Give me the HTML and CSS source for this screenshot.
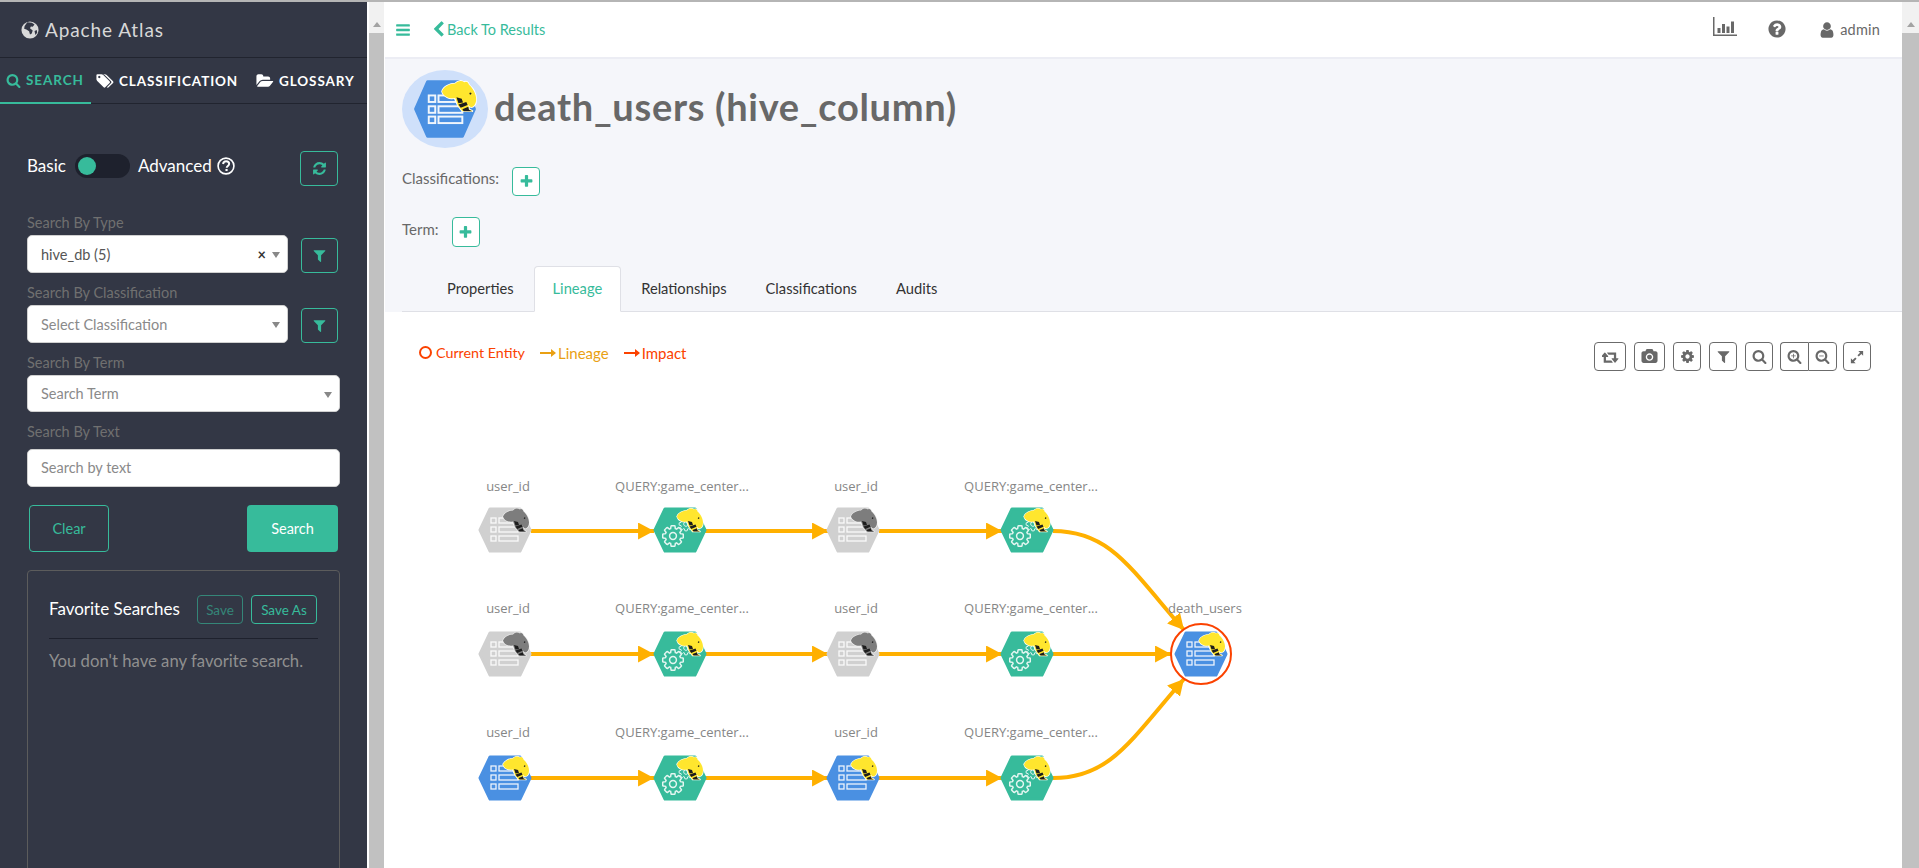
FILE: index.html
```html
<!DOCTYPE html>
<html lang="en">
<head>
<meta charset="utf-8">
<title>Apache Atlas</title>
<link rel="stylesheet" href="styles.css">
</head>
<body>
<svg class="sprite" xmlns="http://www.w3.org/2000/svg">
  <defs>
    <symbol id="i-search" viewBox="0 0 1792 1792"><path d="M1216 832q0-185-131.500-316.500t-316.500-131.500-316.500 131.500-131.500 316.500 131.500 316.500 316.500 131.500 316.500-131.500 131.500-316.500zm512 832q0 52-38 90t-90 38q-54 0-90-38l-343-342q-179 124-399 124-143 0-273.500-55.500t-225-150-150-225-55.500-273.500 55.500-273.500 150-225 225-150 273.500-55.500 273.500 55.500 225 150 150 225 55.500 273.500q0 220-124 399l343 343q37 37 37 90z"/></symbol>
    <symbol id="i-zoomin" viewBox="0 0 1792 1792"><path d="M1216 832q0-185-131.500-316.500t-316.500-131.500-316.500 131.500-131.500 316.500 131.500 316.500 316.500 131.500 316.500-131.500 131.500-316.500zm512 832q0 52-38 90t-90 38q-54 0-90-38l-343-342q-179 124-399 124-143 0-273.500-55.500t-225-150-150-225-55.500-273.500 55.500-273.500 150-225 225-150 273.500-55.500 273.500 55.500 225 150 150 225 55.500 273.500q0 220-124 399l343 343q37 37 37 90z"/><path d="M720 560h96v224h224v96h-224v224h-96v-224h-224v-96h224z"/></symbol>
    <symbol id="i-zoomout" viewBox="0 0 1792 1792"><path d="M1216 832q0-185-131.500-316.500t-316.500-131.500-316.500 131.500-131.500 316.500 131.500 316.500 316.500 131.500 316.500-131.500 131.500-316.500zm512 832q0 52-38 90t-90 38q-54 0-90-38l-343-342q-179 124-399 124-143 0-273.500-55.500t-225-150-150-225-55.500-273.500 55.500-273.500 150-225 225-150 273.500-55.500 273.500 55.500 225 150 150 225 55.500 273.500q0 220-124 399l343 343q37 37 37 90z"/><path d="M496 784h544v96h-544z"/></symbol>
    <symbol id="i-filter" viewBox="0 0 1792 1792"><path d="M1595 295q17 41-14 70l-493 493v742q0 42-39 59-13 5-25 5-27 0-45-19l-256-256q-19-19-19-45v-486l-493-493q-31-29-14-70 17-39 59-39h1280q42 0 59 39z"/></symbol>
    <symbol id="i-plus" viewBox="0 0 1792 1792"><path d="M1600 736v192q0 40-28 68t-68 28h-416v416q0 40-28 68t-68 28h-192q-40 0-68-28t-28-68v-416h-416q-40 0-68-28t-28-68v-192q0-40 28-68t68-28h416v-416q0-40 28-68t68-28h192q40 0 68 28t28 68v416h416q40 0 68 28t28 68z"/></symbol>
    <symbol id="i-refresh" viewBox="0 0 1792 1792"><path d="M1639 1056q0 5-1 7-64 268-268 434.500t-478 166.500q-146 0-282.500-55t-243.500-157l-129 129q-19 19-45 19t-45-19-19-45v-448q0-26 19-45t45-19h448q26 0 45 19t19 45-19 45l-137 137q71 66 161 102t187 36q134 0 250-65t186-179q11-17 53-117 8-23 30-23h192q13 0 22.500 9.500t9.500 22.500zm25-800v448q0 26-19 45t-45 19h-448q-26 0-45-19t-19-45 19-45l138-138q-148-137-349-137-134 0-250 65t-186 179q-11 17-53 117-8 23-30 23h-199q-13 0-22.500-9.500t-9.500-22.500v-7q65-268 270-434.500t480-166.500q146 0 284 55.500t245 156.500l130-129q19-19 45-19t45 19 19 45z"/></symbol>
    <symbol id="i-help" viewBox="0 0 1792 1792"><path d="M1024 1376v-192q0-14-9-23t-23-9h-192q-14 0-23 9t-9 23v192q0 14 9 23t23 9h192q14 0 23-9t9-23zm256-672q0-88-55.500-163t-138.500-116-170-41q-243 0-371 213-15 24 8 42l132 100q7 6 19 6 16 0 25-12 53-68 86-92 34-24 86-24 48 0 85.500 26t37.500 59q0 38-20 61t-68 45q-63 28-115.500 86.500t-52.500 125.500v36q0 14 9 23t23 9h192q14 0 23-9t9-23q0-19 21.500-49.500t54.500-49.500q32-18 49-28.500t46-35 44.500-48 28-60.500 12.500-81zm384 192q0 209-103 385.500t-279.500 279.500-385.500 103-385.500-103-279.500-279.500-103-385.500 103-385.500 279.500-279.500 385.500-103 385.500 103 279.500 279.500 103 385.500z"/></symbol>
    <symbol id="i-help-o" viewBox="0 0 20 20"><circle cx="10" cy="10" r="8.800" fill="none" stroke="currentColor" stroke-width="1.800"/><path d="M6.700 7.800c.3-2 1.700-3 3.400-3 2 0 3.400 1.200 3.400 2.800 0 2.400-2.700 2.400-2.700 4.400" fill="none" stroke="currentColor" stroke-width="2.200"/><rect x="9.400" y="13.300" width="2.400" height="2.300"/></symbol>
    <symbol id="i-user" viewBox="0 0 1792 1792"><path d="M1536 1399q0 109-62.500 187t-150.500 78h-854q-88 0-150.500-78t-62.500-187q0-85 8.500-160.500t31.500-152 58.500-131 94-89 134.500-34.500q131 128 313 128t313-128q76 0 134.500 34.500t94 89 58.500 131 31.500 152 8.500 160.500zm-256-887q0 159-112.500 271.500t-271.500 112.500-271.500-112.500-112.500-271.500 112.500-271.500 271.500-112.500 271.500 112.500 112.500 271.500z"/></symbol>
    <symbol id="i-bars" viewBox="0 0 1792 1792"><path d="M1664 1344v128q0 26-19 45t-45 19h-1408q-26 0-45-19t-19-45v-128q0-26 19-45t45-19h1408q26 0 45 19t19 45zm0-512v128q0 26-19 45t-45 19h-1408q-26 0-45-19t-19-45v-128q0-26 19-45t45-19h1408q26 0 45 19t19 45zm0-512v128q0 26-19 45t-45 19h-1408q-26 0-45-19t-19-45v-128q0-26 19-45t45-19h1408q26 0 45 19t19 45z"/></symbol>
    <symbol id="i-back" viewBox="0 0 1792 1792"><path d="M1427 301l-531 531 531 531q19 19 19 45t-19 45l-166 166q-19 19-45 19t-45-19l-742-742q-19-19-19-45t19-45l742-742q19-19 45-19t45 19l166 166q19 19 19 45t-19 45z"/></symbol>
    <symbol id="i-cog" viewBox="0 0 1792 1792"><path d="M1152 896q0-106-75-181t-181-75-181 75-75 181 75 181 181 75 181-75 75-181zm512-109v222q0 12-8 23t-20 13l-185 28q-19 54-39 91 35 50 107 138 10 12 10 25t-9 23q-27 37-99 108t-94 71q-12 0-26-9l-138-108q-44 23-91 38-16 136-29 186-7 28-36 28h-222q-14 0-24.500-8.500t-11.500-21.500l-28-184q-49-16-90-37l-141 107q-10 9-25 9-14 0-25-11-126-114-165-168-7-10-7-23 0-12 8-23 15-21 51-66.500t54-70.500q-27-50-41-99l-183-27q-13-2-21-12.500t-8-23.500v-222q0-12 8-23t19-13l186-28q14-46 39-92-40-57-107-138-10-12-10-24 0-10 9-23 26-36 98.500-107.500t94.500-71.500q13 0 26 10l138 107q44-23 91-38 16-136 29-186 7-28 36-28h222q14 0 24.500 8.500t11.500 21.500l28 184q49 16 90 37l142-107q9-9 24-9 13 0 25 10 129 119 165 170 7 8 7 22 0 12-8 23-15 21-51 66.500t-54 70.500q26 50 41 98l183 28q13 2 21 12.500t8 23.500z"/></symbol>
    <symbol id="i-camera" viewBox="0 0 1920 1792"><path d="M960 672q119 0 203.500 84.500t84.500 203.500-84.500 203.500-203.500 84.500-203.500-84.500-84.500-203.500 84.500-203.500 203.500-84.500zm704-416q106 0 181 75t75 181v896q0 106-75 181t-181 75h-1408q-106 0-181-75t-75-181v-896q0-106 75-181t181-75h224l51-136q19-49 69.500-84.500t103.500-35.500h512q53 0 103.500 35.500t69.500 84.500l51 136h224zm-704 1152q185 0 316.500-131.500t131.500-316.500-131.500-316.500-316.500-131.500-316.500 131.500-131.500 316.500 131.500 316.500 316.500 131.500z"/></symbol>
    <symbol id="i-folder" viewBox="0 0 1920 1792"><path d="M1879 952q0 31-31 66l-336 396q-43 51-120.500 86.500t-143.500 35.500h-1088q-34 0-60.500-13t-26.500-43q0-31 31-66l336-396q43-51 120.500-86.500t143.500-35.500h1088q34 0 60.500 13t26.500 43zm-343-344v160h-832q-94 0-197 47.500t-164 119.500l-337 396-5 6q0-4-.5-12.500t-.5-12.500v-960q0-92 66-158t158-66h320q92 0 158 66t66 158v32h544q92 0 158 66t66 158z"/></symbol>
    <symbol id="i-tags" viewBox="0 0 1984 1792"><path d="M480 448q0-53-37.500-90.500t-90.500-37.500-90.500 37.500-37.500 90.500 37.500 90.500 90.500 37.500 90.500-37.500 37.500-90.500zm1067 576q0 53-37 90l-491 492q-39 37-91 37-53 0-90-37l-715-716q-38-37-64.500-101t-26.500-117v-416q0-52 38-90t90-38h416q53 0 117 26.500t102 64.500l715 714q37 39 37 91zm384 0q0 53-37 90l-491 492q-39 37-91 37-36 0-59-14t-53-45l470-470q37-37 37-90 0-52-37-91l-715-714q-38-38-102-64.500t-117-26.500h224q53 0 117 26.500t102 64.500l715 714q37 39 37 91z"/></symbol>
    <symbol id="i-globe" viewBox="0 0 20 20"><circle cx="10" cy="10" r="9.500" fill="#d9d9d9"/><path d="M7 1.500l5 .5 3 2-2 2.500-2-.5-1 2 3 2.500-1 3.500-2 1-1-3.500-3-2-2.500-1 .5-3z" fill="#333745"/><path d="M15 11l2.500-1 .5 3-2 2.500z" fill="#333745"/></symbol>
    <symbol id="i-chart" viewBox="0 0 24 19"><path d="M0 0h1.500v17.500h22.500v1.500h-24z"/><path d="M4.500 11h3v5h-3zM9 7h3v9h-3zM13.500 9.500h3v6.500h-3zM18 4.500h3v11.500h-3z"/></symbol>
    <symbol id="i-retweet" viewBox="0 0 1920 1792"><path d="M1216 1504q0 13-9.500 22.500t-22.500 9.500h-960q-8 0-13.500-2t-9-7-5.500-8-3-11.500-1-11.500v-600h-192q-26 0-45-19t-19-45q0-24 15-41l320-384q19-22 49-22t49 22l320 384q15 17 15 41 0 26-19 45t-45 19h-192v384h576q16 0 25 11l160 192q7 10 7 21zm640-416q0 24-15 41l-320 384q-20 23-49 23t-49-23l-320-384q-15-17-15-41 0-26 19-45t45-19h192v-384h-576q-16 0-25-12l-160-192q-7-9-7-20 0-13 9.500-22.500t22.500-9.500h960q8 0 13.500 2t9 7 5.500 8 3 11.500 1 11.500v600h192q26 0 45 19t19 45z"/></symbol>
    <symbol id="i-expand" viewBox="0 0 16 16"><path d="M9.500 1h5.500v5.500l-2-2-3 3-1.500-1.500 3-3zM6.500 15h-5.500v-5.500l2 2 3-3 1.500 1.500-3 3z"/></symbol>

    <symbol id="bee" viewBox="-4 -8 112 104">
      <path class="bee-edge" d="M0 30C4 16 24 6 40 6C48-3 60-4 68 2C74-2 80 2 82 10C94 20 104 38 104 54C104 66 98 76 90 78C84 78 82 76 80 72L82 84L94 90L62 90L48 72L38 50C24 54 4 46 0 30Z"/>
      <path class="bee-body" d="M0 30C4 16 24 6 40 6C48-3 60-4 68 2C74-2 80 2 82 10C94 20 104 38 104 54C104 66 98 76 90 78C84 78 80 72 78 66L70 62C58 66 48 56 40 50C24 54 4 46 0 30Z"/>
      <path class="bee-body" d="M40 48L78 60L82 84L94 90L62 90L48 72Z"/>
      <path class="bee-ink" d="M44 48L60 52L64 64L50 66ZM50 70L74 62L78 71L57 80ZM62 84L80 77L82 86L92 90L66 90Z"/>
      <path class="bee-ink" d="M85 33l5 2-2 5-5-2z"/>
    </symbol>

    <symbol id="glyph-table" viewBox="-26 -23 52 46" overflow="visible">
      <g fill="none" stroke="#fff" stroke-width="1.300" opacity=".9">
        <rect x="-14" y="-12" width="5" height="5"/><rect x="-14" y="-3" width="5" height="5"/><rect x="-14" y="6" width="5" height="5"/>
        <rect x="-6" y="-12" width="19" height="5"/><rect x="-6" y="-3" width="19" height="5"/><rect x="-6" y="6" width="19" height="5"/>
      </g>
    </symbol>
    <symbol id="hex-shape" viewBox="-27 -24 54 48">
      <path d="M-25 0L-15 -21H15L25 0L15 21H-15Z" stroke-width="3" stroke-linejoin="round"/>
    </symbol>

    <g id="n-table">
      <use href="#hex-shape" class="hex-blue" x="-27" y="-24" width="54" height="48"/>
      <use href="#glyph-table" x="-26" y="-23" width="52" height="46"/>
      <use href="#bee" class="bee-y" x="-3" y="-23" width="28" height="26"/>
    </g>
    <g id="n-table-off">
      <use href="#hex-shape" class="hex-gray" x="-27" y="-24" width="54" height="48"/>
      <use href="#glyph-table" x="-26" y="-23" width="52" height="46"/>
      <use href="#bee" class="bee-g" x="-3" y="-23" width="28" height="26"/>
    </g>
    <g id="n-query">
      <use href="#hex-shape" class="hex-teal" x="-27" y="-24" width="54" height="48"/>
      <use href="#i-cog" class="gear" x="-2" y="-14" width="16" height="16"/>
      <use href="#i-cog" class="gear" x="-19" y="-6" width="24" height="24"/>
      <use href="#bee" class="bee-y" x="-4" y="-23" width="28" height="26"/>
    </g>
    <marker id="arrow" markerUnits="userSpaceOnUse" markerWidth="17" markerHeight="17" refX="15" refY="8" orient="auto" viewBox="0 0 16 16">
      <path d="M0 0L15 8L0 16Z" fill="#ffb000"/>
    </marker>
  </defs>
</svg>

<div class="topline"></div>
<div class="shell">
  <aside class="sidebar">
    <div class="brand"><svg class="ic-brand"><use href="#i-globe"/></svg><span>Apache Atlas</span></div>
    <nav class="side-tabs">
      <a class="side-tab active tab-search"><svg class="ic-14"><use href="#i-search"/></svg>SEARCH</a>
      <a class="side-tab tab-class"><svg class="ic-tag"><use href="#i-tags"/></svg>CLASSIFICATION</a>
      <a class="side-tab tab-gloss"><svg class="ic-folder"><use href="#i-folder"/></svg>GLOSSARY</a>
    </nav>
    <div class="form">
      <div class="mode-row">
        <span class="mode-label">Basic</span>
        <span class="toggle"><span class="knob"></span></span>
        <span class="mode-label">Advanced</span>
        <svg class="ic-help"><use href="#i-help-o"/></svg>
        <button class="btn-ghost btn-refresh"><svg class="ic-16"><use href="#i-refresh"/></svg></button>
      </div>
      <div class="field first">
        <div class="field-label">Search By Type</div>
        <div class="field-row">
          <div class="select short"><span class="value">hive_db (5)</span><span class="clear-x">×</span><span class="caret"></span></div>
          <button class="btn-ghost btn-filter"><svg class="ic-14"><use href="#i-filter"/></svg></button>
        </div>
      </div>
      <div class="field">
        <div class="field-label">Search By Classification</div>
        <div class="field-row">
          <div class="select short"><span class="placeholder">Select Classification</span><span class="caret"></span></div>
          <button class="btn-ghost btn-filter"><svg class="ic-14"><use href="#i-filter"/></svg></button>
        </div>
      </div>
      <div class="field">
        <div class="field-label">Search By Term</div>
        <div class="select wide"><span class="placeholder">Search Term</span><span class="caret"></span></div>
      </div>
      <div class="field">
        <div class="field-label tall">Search By Text</div>
        <div class="select wide text-input"><span class="placeholder">Search by text</span></div>
      </div>
      <div class="actions">
        <button class="btn-ghost btn-clear">Clear</button>
        <button class="btn-search">Search</button>
      </div>
      <section class="favorites">
        <div class="fav-head">
          <h4 class="fav-title">Favorite Searches</h4>
          <button class="btn-mini btn-save muted">Save</button>
          <button class="btn-mini btn-saveas">Save As</button>
        </div>
        <p class="fav-empty">You don't have any favorite search.</p>
      </section>
    </div>
  </aside>

  <div class="scrollbar inner"><span class="scroll-up"></span><span class="scroll-thumb"></span></div>

  <main class="main">
    <header class="topbar">
      <svg class="ic-menu"><use href="#i-bars"/></svg>
      <svg class="ic-back"><use href="#i-back"/></svg>
      <a class="back-link">Back To Results</a>
      <div class="top-right">
        <svg class="ic-chart"><use href="#i-chart"/></svg>
        <svg class="ic-q"><use href="#i-help"/></svg>
        <svg class="ic-user"><use href="#i-user"/></svg>
        <span class="admin">admin</span>
      </div>
    </header>

    <section class="detail">
      <div class="hero">
        <div class="hero-badge">
          <svg class="hero-icon" viewBox="-36 -36 72 72">
            <path d="M-27 0L-16 -25H16L27 0L16 25H-16Z" fill="#4a90e2" stroke="#4a90e2" stroke-width="3" stroke-linejoin="round"/>
            <g fill="none" stroke="#fff" stroke-width="1.800" opacity=".92">
              <rect x="-15" y="-12.500" width="6" height="6"/><rect x="-15" y="-2.500" width="6" height="6"/><rect x="-15" y="7" width="6" height="6"/>
              <rect x="-6" y="-12.500" width="22" height="6"/><rect x="-6" y="-2.500" width="22" height="6"/><rect x="-6" y="7" width="22" height="6"/>
            </g>
            <use href="#bee" class="bee-y" x="-4" y="-28" width="34" height="32"/>
          </svg>
        </div>
        <h1 class="title">death_users (hive_column)</h1>
      </div>
      <div class="meta-row class-row"><span>Classifications:</span><button class="btn-add"><svg class="ic-13"><use href="#i-plus"/></svg></button></div>
      <div class="meta-row term-row"><span>Term:</span><button class="btn-add"><svg class="ic-13"><use href="#i-plus"/></svg></button></div>
      <div class="tabs">
        <a class="tab">Properties</a>
        <a class="tab active">Lineage</a>
        <a class="tab">Relationships</a>
        <a class="tab">Classifications</a>
        <a class="tab">Audits</a>
      </div>
    </section>

    <section class="lineage">
      <div class="lineage-bar">
        <div class="legend">
          <span class="legend-ring"></span><span class="lg-red">Current Entity</span>
          <span class="legend-arrow yellow"></span><span class="lg-yellow lg-wide">Lineage</span>
          <span class="legend-arrow red"></span><span class="lg-red lg-wide">Impact</span>
        </div>
        <div class="tools">
          <button class="tool t-first"><svg class="ic-retweet"><use href="#i-retweet"/></svg></button>
          <button class="tool t-second"><svg class="ic-cam"><use href="#i-camera"/></svg></button>
          <button class="tool"><svg class="ic-tool"><use href="#i-cog"/></svg></button>
          <button class="tool"><svg class="ic-tool"><use href="#i-filter"/></svg></button>
          <button class="tool t-before-group"><svg class="ic-tool"><use href="#i-search"/></svg></button>
          <span class="tool-group">
            <button class="tool"><svg class="ic-tool"><use href="#i-zoomin"/></svg></button>
            <button class="tool"><svg class="ic-tool"><use href="#i-zoomout"/></svg></button>
          </span>
          <button class="tool"><svg class="ic-expand"><use href="#i-expand"/></svg></button>
        </div>
      </div>

      <svg class="graph" viewBox="385 372 1517 496" xmlns="http://www.w3.org/2000/svg">
        <g class="edges">
          <path d="M531 531H654" marker-end="url(#arrow)"/><path d="M705 531H828" marker-end="url(#arrow)"/><path d="M879 531H1002" marker-end="url(#arrow)"/>
          <path d="M531 654H654" marker-end="url(#arrow)"/><path d="M705 654H828" marker-end="url(#arrow)"/><path d="M879 654H1002" marker-end="url(#arrow)"/>
          <path d="M531 778H654" marker-end="url(#arrow)"/><path d="M705 778H828" marker-end="url(#arrow)"/><path d="M879 778H1002" marker-end="url(#arrow)"/>
          <path d="M1053 531C1110 531 1130 568 1184 630" marker-end="url(#arrow)"/>
          <path d="M1053 654H1171" marker-end="url(#arrow)"/>
          <path d="M1053 778C1110 778 1130 741 1184 679" marker-end="url(#arrow)"/>
        </g>
        <g class="labels">
          <text x="508" y="491">user_id</text><text x="682" y="491" class="q">QUERY:game_center...</text><text x="856" y="491">user_id</text><text x="1031" y="491" class="q">QUERY:game_center...</text>
          <text x="508" y="613">user_id</text><text x="682" y="613" class="q">QUERY:game_center...</text><text x="856" y="613">user_id</text><text x="1031" y="613" class="q">QUERY:game_center...</text>
          <text x="508" y="737">user_id</text><text x="682" y="737" class="q">QUERY:game_center...</text><text x="856" y="737">user_id</text><text x="1031" y="737" class="q">QUERY:game_center...</text>
          <text x="1205" y="613">death_users</text>
        </g>
        <use href="#n-table-off" x="505" y="530"/><use href="#n-query" x="680" y="530"/><use href="#n-table-off" x="853" y="530"/><use href="#n-query" x="1027" y="530"/>
        <use href="#n-table-off" x="505" y="654"/><use href="#n-query" x="680" y="654"/><use href="#n-table-off" x="853" y="654"/><use href="#n-query" x="1027" y="654"/>
        <use href="#n-table" x="505" y="778"/><use href="#n-query" x="680" y="778"/><use href="#n-table" x="853" y="778"/><use href="#n-query" x="1027" y="778"/>
        <circle class="focus-ring" cx="1201" cy="654" r="30"/>
        <use href="#n-table" x="1201" y="654"/>
      </svg>
    </section>
  </main>

  <div class="scrollbar outer"><span class="scroll-up"></span><span class="scroll-thumb"></span></div>
</div>
</body>
</html>
```
FILE: styles.css
```css
* { box-sizing: border-box; }
html, body { margin: 0; height: 868px; overflow: hidden; }
body { font-family: "Lato", "Noto Sans", sans-serif; font-size: 14.500px; color: #686868; background: #fff; display: flex; flex-direction: column; position: relative; }
button { font-family: inherit; cursor: pointer; padding: 0; background: none; }
svg { fill: currentColor; display: block; flex: none; }
.sprite { width: 0; height: 0; position: absolute; left: 0; top: 0; }

.topline { height: 2px; background: #b5b5b5; flex: none; }
.shell { flex: none; height: 866px; overflow: hidden; display: flex; }

/* sidebar */
.sidebar { width: 367px; flex: none; background: #333745; color: #fff; overflow: hidden; }
.brand { height: 56px; border-bottom: 1px solid #21242f; display: flex; align-items: center; padding-left: 21px; gap: 6px; font-size: 19px; letter-spacing: .9px; color: #d8d8d8; }
.ic-brand { width: 18px; height: 18px; }
.side-tabs { height: 46px; border-bottom: 1px solid #21242f; display: flex; position: relative; font-weight: 700; font-size: 13.500px; letter-spacing: .9px; }
.side-tab { display: flex; align-items: center; gap: 5px; color: #fff; height: 46px; }
.side-tab.active { color: #37bb9b; border-bottom: 2px solid #37bb9b; }
.tab-search { width: 91px; padding-left: 6px; }
.tab-class { width: 160px; padding-left: 5px; }
.tab-gloss { padding-left: 5px; }
.ic-14 { width: 15px; height: 15px; }
.ic-tag { width: 18px; height: 16px; }
.ic-folder { width: 18px; height: 16px; }

.form { padding: 47px 0 0 27px; }
.mode-row { display: flex; align-items: flex-start; height: 35px; width: 311px; font-size: 17px; line-height: 30px; }
.toggle { width: 55px; height: 24px; border-radius: 12px; background: #1e212d; margin: 3px 8px 0 9px; padding: 3px 0 0 3px; flex: none; }
.knob { display: block; width: 18px; height: 18px; border-radius: 50%; background: #37bb9b; }
.ic-help { width: 18px; height: 18px; margin: 6px 0 0 5px; color: #fff; }
.btn-ghost { border: 1px solid #37bb9b; border-radius: 4px; color: #37bb9b; display: flex; align-items: center; justify-content: center; }
.btn-refresh { width: 38px; height: 35px; margin-left: auto; }
.ic-16 { width: 15px; height: 15px; }

.field { margin-top: 11px; }
.field.first { margin-top: 28px; }
.field-label { height: 21px; line-height: 18px; color: #707070; font-size: 14.500px; }
.field-label.tall { height: 26px; }
.field-row { display: flex; justify-content: space-between; width: 311px; align-items: flex-end; }
.select { height: 38px; background: #fff; border: 1px solid #d0d0d0; border-radius: 5px; display: flex; align-items: center; padding: 0 7px 0 13px; color: #555; }
.select.short { width: 261px; }
.select.wide { width: 313px; height: 37px; }
.select.text-input { height: 38px; padding-bottom: 2px; }
.value { color: #555; flex: 1; }
.placeholder { color: #8a8a8a; flex: 1; }
.clear-x { color: #333; font-weight: 700; margin-right: 6px; }
.caret { width: 0; height: 0; border-left: 4.500px solid transparent; border-right: 4.500px solid transparent; border-top: 6px solid #888; margin-top: 2px; }
.btn-filter { width: 37px; height: 35px; }

.actions { display: flex; justify-content: space-between; width: 309px; margin: 18px 0 0 2px; }
.btn-clear { width: 80px; height: 47px; font-size: 14.500px; }
.btn-search { width: 91px; height: 47px; background: #37bb9b; color: #fff; border: 0; border-radius: 4px; font-size: 14.500px; }

.favorites { width: 313px; height: 320px; margin-top: 18px; border: 1px solid #5c5c5c; border-radius: 4px; padding: 24px 21px; }
.fav-head { display: flex; align-items: flex-start; height: 44px; border-bottom: 1px solid #1e212d; width: 269px; }
.fav-title { margin: 0 auto 0 0; font-weight: 400; font-size: 17px; color: #fff; white-space: nowrap; line-height: 28px; }
.btn-mini { height: 29px; border: 1px solid #37bb9b; border-radius: 4px; color: #37bb9b; font-size: 13.500px; margin-left: 8px; }
.btn-save { width: 46px; }
.btn-saveas { width: 66px; margin-right: 1px; }
.btn-mini.muted { opacity: .6; }
.fav-empty { margin: 12px 0 0; color: #8f8f8f; font-size: 16.700px; white-space: nowrap; }

/* scrollbars */
.scrollbar { flex: none; background: #f1f1f1; display: flex; flex-direction: column; align-items: center; }
.scrollbar.inner { width: 15px; margin: 0 1px 0 2px; }
.scrollbar.outer { width: 17px; }
.scroll-up { height: 18px; flex: none; width: 0; border-left: 4.500px solid transparent; border-right: 4.500px solid transparent; border-bottom: 5px solid #a3a3a3; border-top: 0; margin-top: 7px; margin-bottom: 6px; }
.scroll-thumb { flex: 1; width: 100%; background: #c1c1c1; }

/* main */
.main { flex: 1; min-width: 0; display: flex; flex-direction: column; background: #fff; overflow: hidden; }
.topbar { height: 57px; flex: none; border-bottom: 2px solid #ecedf4; display: flex; align-items: center; padding: 0 22px 0 10px; }
.ic-menu { width: 16px; height: 16px; color: #37bb9b; }
.ic-back { width: 17px; height: 19px; color: #37bb9b; margin-left: 19px; }
.back-link { color: #37bb9b; margin-left: 0; font-size: 14.500px; }
.top-right { margin-left: auto; display: flex; align-items: center; color: #686868; }
.ic-chart { width: 24px; height: 19px; margin-top: -6px; }
.ic-q { width: 20px; height: 20px; margin-left: 30px; margin-top: -2px; }
.ic-user { width: 18px; height: 18px; margin-left: 31px; }
.admin { margin-left: 4px; font-size: 14.500px; letter-spacing: .2px; }

.detail { background: #f5f6fa; flex: none; padding: 11px 0 0 17px; }
.hero { display: flex; align-items: center; height: 78px; }
.hero-badge { width: 86px; height: 78px; border-radius: 50%; background: #cfe0fa; display: flex; align-items: center; justify-content: center; flex: none; }
.hero-icon { width: 78px; height: 78px; }
.title { margin: -7px 0 0 6px; font-size: 38px; font-weight: 700; letter-spacing: .7px; color: #686868; white-space: nowrap; }
.meta-row { display: flex; align-items: flex-start; font-size: 15px; color: #686868; line-height: 22px; }
.meta-row span { display: block; }
.class-row { margin-top: 19px; gap: 13px; }
.term-row { margin-top: 21px; gap: 13px; }
.term-row span { padding-top: 1px; }
.btn-add { width: 28px; height: 29px; border: 1px solid #37bb9b; border-radius: 4px; color: #37bb9b; background: #fff; display: flex; align-items: center; justify-content: center; }
.term-row .btn-add { height: 30px; }
.ic-13 { width: 15px; height: 15px; }

.tabs { display: flex; margin-top: 19px; height: 46px; padding-left: 26px; border-bottom: 1px solid #dfe0e6; gap: 1px; font-size: 14.700px; }
.tab { padding: 0 18px; height: 46px; line-height: 43px; color: #333; border: 1px solid transparent; border-radius: 4px 4px 0 0; }
.tab.active { color: #37bb9b; background: #fff; border-color: #dfe0e6 #dfe0e6 #fff; }

.lineage { flex: 1; min-height: 0; display: flex; flex-direction: column; }
.lineage-bar { display: flex; justify-content: space-between; align-items: flex-start; height: 30px; margin-top: 30px; padding: 0 31px 0 34px; flex: none; }
.legend { display: flex; align-items: center; font-size: 14.300px; height: 21px; }
.legend-ring { width: 13px; height: 13px; border: 2px solid #fb4200; border-radius: 50%; margin-right: 4px; }
.legend-arrow { width: 15px; height: 2px; position: relative; margin: 0 3px 0 15px; }
.legend-arrow::after { content: ""; position: absolute; right: -1px; top: -3px; border-left: 5px solid; border-top: 4px solid transparent; border-bottom: 4px solid transparent; border-left-color: inherit; }
.legend-arrow.yellow { background: #e9a013; border-color: #e9a013; }
.legend-arrow.red { background: #fb4200; border-color: #fb4200; }
.lg-red { color: #fb4200; }
.lg-yellow { color: #e9a013; }
.lg-wide { font-size: 15px; }
.tools { display: flex; gap: 8px; }
.tool { width: 28px; height: 29px; border: 1px solid #6b6b6b; border-radius: 4px; color: #686868; background: #fff; display: flex; align-items: center; justify-content: center; }
.t-first { width: 32px; }
.t-second { width: 31px; }
.t-before-group { margin-right: -1px; }
.tool-group { display: flex; margin-right: -2px; }
.tool-group .tool { width: 29px; }
.tool-group .tool:first-child { border-radius: 4px 0 0 4px; border-right: 0; width: 28px; }
.tool-group .tool:last-child { border-radius: 0 4px 4px 0; }
.ic-tool { width: 15px; height: 15px; }
.ic-retweet { width: 17px; height: 16px; }
.ic-cam { width: 17px; height: 15px; }
.ic-expand { width: 14px; height: 14px; }

.graph { flex: none; width: 1517px; height: 496px; }
.edges path { fill: none; stroke: #ffb000; stroke-width: 4; }
.labels text { font-family: "Open Sans", "Noto Sans", sans-serif; font-size: 13px; fill: #868686; text-anchor: middle; }
.focus-ring { fill: #fff; stroke: #fb4200; stroke-width: 2; }

.hex-blue { fill: #4a90e2; stroke: #4a90e2; }
.hex-gray { fill: #d0d0d0; stroke: #d0d0d0; }
.hex-teal { fill: #37bb9b; stroke: #37bb9b; }
.gear { fill: none; stroke: #e4f6f1; stroke-width: 110; }
.bee-y { --bee-body: #ffe62e; --bee-ink: #1d1d1d; --bee-edge: #ffffff; }
.bee-g { --bee-body: #7d7d7d; --bee-ink: #1d1d1d; --bee-edge: #f1f1f1; }
.bee-body { fill: var(--bee-body); }
.bee-ink { fill: var(--bee-ink); }
.bee-edge { fill: var(--bee-edge); stroke: var(--bee-edge); stroke-width: 5; }
```
